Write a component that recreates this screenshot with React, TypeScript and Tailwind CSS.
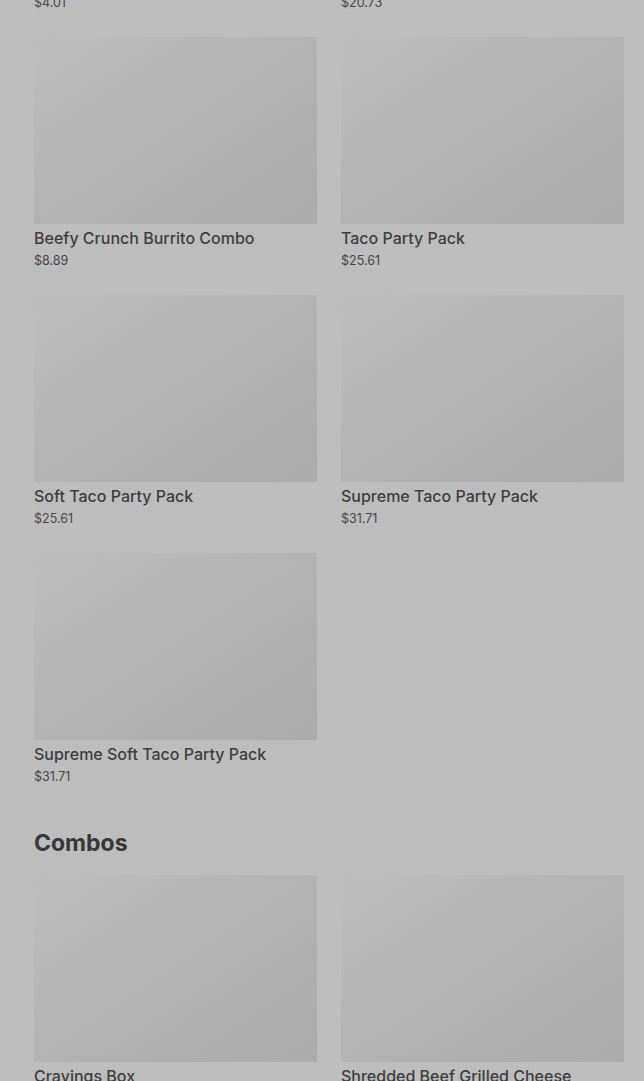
const ROWS_TOP = [
  { name: "Cheesy Gordita Crunch", price: "$4.01" },
  { name: "Nachos Party Pack", price: "$20.73" },
];

const PARTY = [
  { name: "Beefy Crunch Burrito Combo", price: "$8.89" },
  { name: "Taco Party Pack", price: "$25.61" },
  { name: "Soft Taco Party Pack", price: "$25.61" },
  { name: "Supreme Taco Party Pack", price: "$31.71" },
  { name: "Supreme Soft Taco Party Pack", price: "$31.71" },
];

const COMBOS = [
  { name: "Cravings Box", price: "$6.49" },
  { name: "Shredded Beef Grilled Cheese", price: "$9.19" },
];

function Card({ name, price }: { name: string; price: string }) {
  return (
    <div className="flex flex-col pb-[1px]">
      <div className="h-[187px] w-full bg-gradient-to-br from-[#bdbdbd] via-[#b3b3b3] to-[#ababab]" />
      <div className="mt-[2px] text-[16px] leading-6 font-medium text-[#3d3d3d]">{name}</div>
      <div className="mt-[2px] text-[12.5px] leading-[18px] text-[#474747]">{price}</div>
    </div>
  );
}

export default function App() {
  return (
    <div
      className="h-[1081px] overflow-hidden bg-[#bdbdbd] pl-[34px] pr-[20px]"
      style={{ fontFamily: "Inter, Roboto, sans-serif" }}
    >
      <div className="mt-[-221px] grid grid-cols-2 gap-x-[24px] gap-y-[24px]">
        {ROWS_TOP.concat(PARTY).map((p) => (
          <Card key={p.name} {...p} />
        ))}
      </div>
      <h2 className="mt-[40px] text-[23px] leading-8 font-bold text-[#383838]">Combos</h2>
      <div className="mt-[16px] grid grid-cols-2 gap-x-[24px] gap-y-[24px]">
        {COMBOS.map((p) => (
          <Card key={p.name} {...p} />
        ))}
      </div>
    </div>
  );
}
